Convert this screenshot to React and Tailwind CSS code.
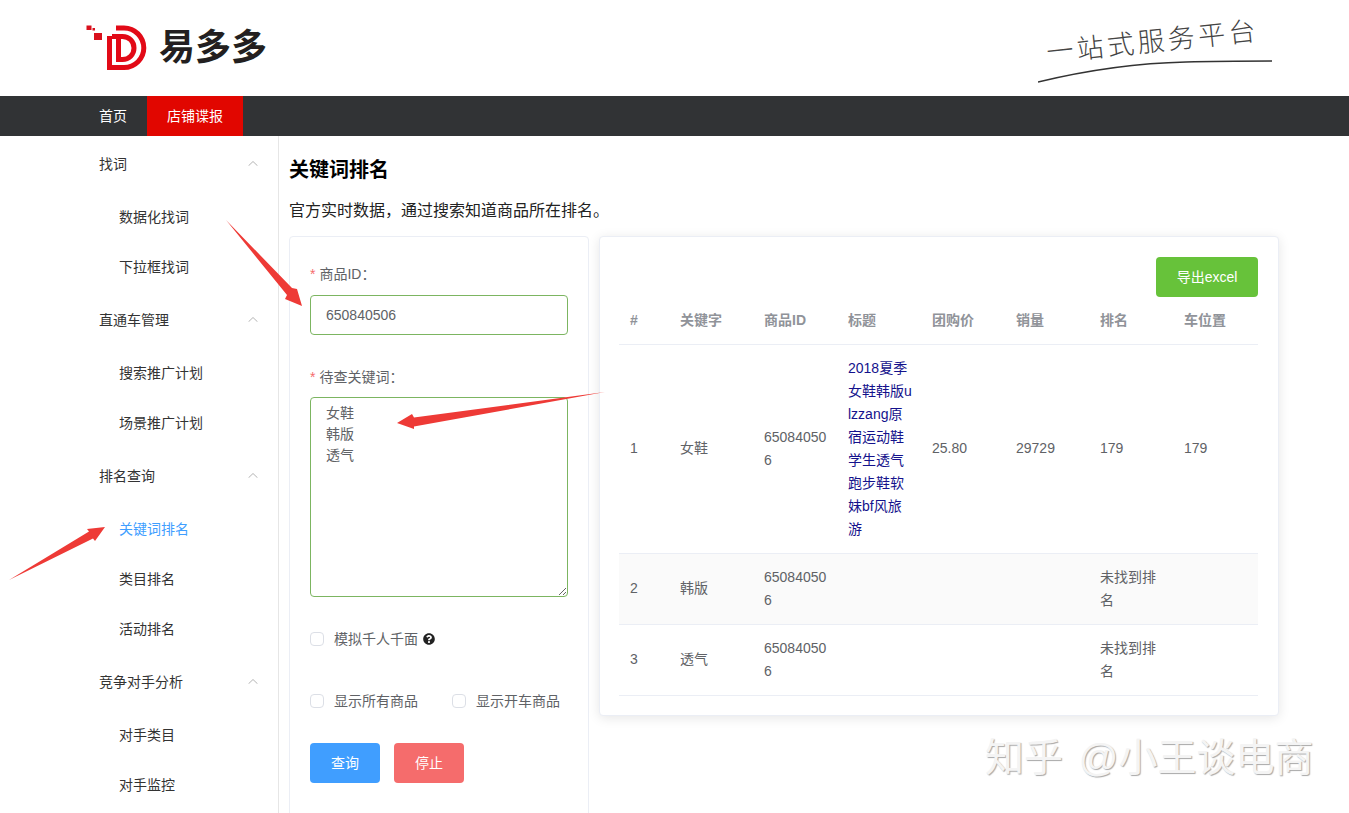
import React from 'react';
import { FaQuestionCircle } from 'react-icons/fa';

const menu = [
  { title: '找词', items: ['数据化找词', '下拉框找词'] },
  { title: '直通车管理', items: ['搜索推广计划', '场景推广计划'] },
  { title: '排名查询', items: ['关键词排名', '类目排名', '活动排名'] },
  { title: '竞争对手分析', items: ['对手类目', '对手监控'] },
];

const columns = ['#', '关键字', '商品ID', '标题', '团购价', '销量', '排名', '车位置'];

const rows = [
  { no: 1, word: '女鞋', id: '650840506', title: '2018夏季女鞋韩版ulzzang原宿运动鞋学生透气跑步鞋软妹bf风旅游', price: '25.80', sales: '29729', rank: '179', car: '179' },
  { no: 2, word: '韩版', id: '650840506', title: '', price: '', sales: '', rank: '未找到排名', car: '', striped: true },
  { no: 3, word: '透气', id: '650840506', title: '', price: '', sales: '', rank: '未找到排名', car: '' },
];

const Logo = () => (
  <svg viewBox="86 20 62 50" className="w-[62px] h-[50px] shrink-0" fill="none">
    <rect x="86.5" y="22.5" width="5" height="4.5" fill="#d9101c" />
    <rect x="92.5" y="25" width="2.5" height="2.5" fill="#d9101c" />
    <rect x="94" y="30" width="8" height="7" fill="#d9101c" />
    <path d="M109.5 33V64.500H124C135 64.500 143.800 55.500 143.800 45C143.800 34 135 25 124 25H116" stroke="#e20a17" strokeWidth="5" />
    <path d="M118.500 33V56.500H122.500C129 56.500 134 51.500 134 45C134 38.500 129 33.500 122.500 33.500H112" stroke="#e20a17" strokeWidth="5" />
  </svg>
);

const Chevron = () => (
  <svg viewBox="0 0 10 5" className="w-[10px] h-[5px] -mt-[2px]" fill="none">
    <path d="M0.500 4.800L5 0.500L9.500 4.800" stroke="#b4b4b4" strokeWidth="1" />
  </svg>
);

const Checkbox = ({ label, className = '' }) => (
  <label className={`flex items-center text-sm text-[#606266] ${className}`}>
    <span className="w-[14px] h-[14px] border border-[#dcdfe6] rounded-sm bg-white mr-[10px]" />
    {label}
  </label>
);

const FieldLabel = ({ children }) => (
  <div className="h-5 leading-5 text-sm text-[#606266]">
    <span className="text-[#f56c6c] mr-1">*</span>
    {children}
  </div>
);

const Sidebar = () => (
  <aside className="w-[279px] shrink-0 border-r border-[#e6e6e6] bg-white text-sm text-[#333]">
    {menu.map((group) => (
      <div key={group.title}>
        <div className="h-14 pl-[99px] pr-5 flex items-center justify-between">
          <span>{group.title}</span>
          <Chevron />
        </div>
        {group.items.map((item) => (
          <div key={item} className={`h-[50px] pl-[119px] flex items-center ${item === '关键词排名' ? 'text-[#409eff]' : ''}`}>
            {item}
          </div>
        ))}
      </div>
    ))}
  </aside>
);

const SearchForm = () => (
  <section className="w-[300px] shrink-0 h-[620px] border border-[#ebeef5] rounded bg-white px-5 pt-[27px]">
    <FieldLabel>商品ID：</FieldLabel>
    <input
      readOnly
      value="650840506"
      className="block mt-[11px] w-[258px] h-10 px-[15px] border border-[#7cb561] rounded text-sm text-[#606266] outline-none"
    />
    <div className="mt-8">
      <FieldLabel>待查关键词：</FieldLabel>
    </div>
    <textarea
      readOnly
      value={'女鞋\n韩版\n透气'}
      className="block mt-[10px] w-[258px] h-[200px] px-[15px] py-[5px] leading-[21px] border border-[#7cb561] rounded text-sm text-[#606266] outline-none"
    />
    <div className="mt-[32px] h-5 flex items-center">
      <Checkbox label="模拟千人千面" />
      <FaQuestionCircle className="ml-[5px] text-[12px] text-[#222]" />
    </div>
    <div className="mt-[42px] h-5 flex items-center">
      <Checkbox label="显示所有商品" />
      <Checkbox label="显示开车商品" className="ml-[34px]" />
    </div>
    <div className="mt-[32px] flex gap-[14px]">
      <button className="w-[70px] h-10 rounded bg-[#409eff] text-sm text-white">查询</button>
      <button className="w-[70px] h-10 rounded bg-[#f56c6c] text-sm text-white">停止</button>
    </div>
  </section>
);

const ResultTable = () => (
  <section className="w-[680px] shrink-0 h-[480px] border border-[#ebeef5] rounded bg-white shadow-[0_2px_12px_0_rgba(0,0,0,0.1)] p-5 pl-[19px]">
    <div className="flex justify-end">
      <button className="w-[102px] h-10 rounded bg-[#67c23a] text-sm text-white">导出excel</button>
    </div>
    <table className="w-[639px] table-fixed border-collapse text-sm text-[#606266]">
      <colgroup>
        <col className="w-[50px]" />
        <col className="w-[84px]" />
        <col className="w-[84px]" />
        <col className="w-[84px]" />
        <col className="w-[84px]" />
        <col className="w-[84px]" />
        <col className="w-[84px]" />
        <col className="w-[85px]" />
      </colgroup>
      <thead>
        <tr className="border-b border-[#ebeef5]">
          {columns.map((col) => (
            <th key={col} className="h-[47px] pl-[11px] pr-[9px] text-left font-bold text-[#909399]">{col}</th>
          ))}
        </tr>
      </thead>
      <tbody>
        {rows.map((row) => (
          <tr key={row.no} className={`border-b border-[#ebeef5] leading-[23px] ${row.striped ? 'bg-[#fafafa]' : ''}`}>
            <td className="py-3 pl-[11px] pr-[9px]">{row.no}</td>
            <td className="py-3 pl-[11px] pr-[9px]">{row.word}</td>
            <td className="py-3 pl-[11px] pr-[9px] break-all">{row.id}</td>
            <td className="py-3 pl-[11px] pr-[9px] break-all text-[#14128c]">{row.title}</td>
            <td className="py-3 pl-[11px] pr-[9px]">{row.price}</td>
            <td className="py-3 pl-[11px] pr-[9px]">{row.sales}</td>
            <td className="py-3 pl-[11px] pr-[9px]">{row.rank}</td>
            <td className="py-3 pl-[11px] pr-[9px]">{row.car}</td>
          </tr>
        ))}
      </tbody>
    </table>
  </section>
);

export default function App() {
  return (
    <div className="relative h-screen flex flex-col overflow-hidden bg-white font-['Liberation_Sans','Noto_Sans_CJK_SC',sans-serif]">
      <header className="h-24 shrink-0 pl-[86px] pr-[76px] flex items-center justify-between">
        <div className="flex items-center">
          <Logo />
          <span className="ml-[11px] text-[36px] leading-none font-bold text-[#231f20]">易多多</span>
        </div>
        <div className="w-[235px] mt-[14px] flex flex-col items-center">
          <div className="-rotate-[6deg] text-[27px] leading-8 tracking-[3.500px] font-light text-[#444] whitespace-nowrap -ml-[6px]">
            一站式服务平台
          </div>
          <svg viewBox="0 0 235 24" className="w-[235px] h-6 mt-[2px]" fill="none">
            <path d="M0 22C50 10 100 3 148 2C180 1 210 1 234 1" stroke="#333" strokeWidth="1.400" />
          </svg>
        </div>
      </header>

      <nav className="h-10 shrink-0 pl-[79px] flex bg-[#313335] text-sm text-white">
        <a className="px-5 flex items-center">首页</a>
        <a className="px-5 flex items-center bg-[#e10600]">店铺谍报</a>
      </nav>

      <div className="flex-1 min-h-0 flex overflow-hidden">
        <Sidebar />
        <main className="flex-1 pl-[10px]">
          <h1 className="mt-[20px] h-7 leading-7 text-[20px] font-bold text-black">关键词排名</h1>
          <p className="mt-[15px] h-6 leading-6 text-base text-[#222]">官方实时数据，通过搜索知道商品所在排名。</p>
          <div className="mt-[13px] flex items-start gap-[10px]">
            <SearchForm />
            <ResultTable />
          </div>
        </main>
      </div>

      {/* annotation arrows drawn on top of the screenshot */}
      <svg className="absolute inset-0 w-full h-full pointer-events-none" viewBox="0 0 1349 813">
        <polygon points="226,220 292,288 297,289 302,306 285,299 287,295" fill="#ee3a36" />
        <polygon points="605,392 414,417.500 412,414 397,423 414,429 414,426.500" fill="#ee3a36" />
        <polygon points="9,580 89,531.500 87,529 105,527 95,541 93,538.500" fill="#ee3a36" />
      </svg>

      <div className="absolute left-[985px] top-[734px] text-[39px] leading-[48px] whitespace-nowrap text-[#f4f4f4] [word-spacing:5px] [text-shadow:1px_1px_1px_#a8a8a8]">
        知乎 @小王谈电商
      </div>
    </div>
  );
}
